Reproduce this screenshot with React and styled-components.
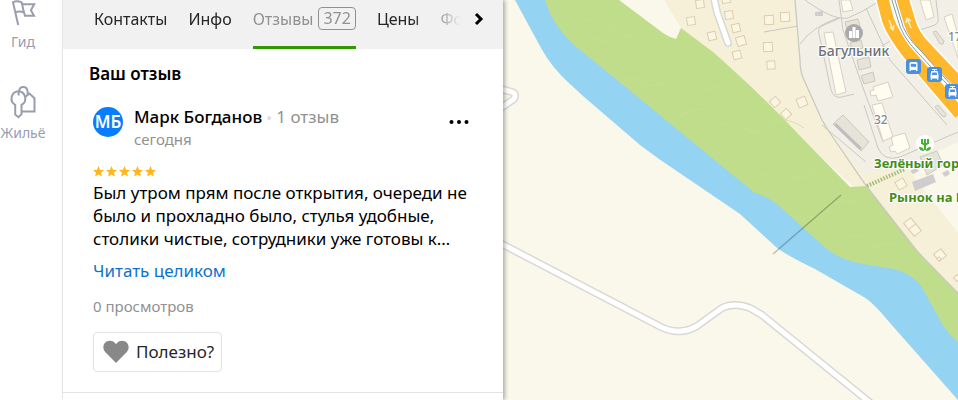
import styled, { createGlobalStyle } from 'styled-components';

const TABS = [
    { title: 'Контакты' },
    { title: 'Инфо' },
    { title: 'Отзывы', count: 372, active: true },
    { title: 'Цены' },
    { title: 'Фото' },
];

// x, y, size, rotation
const HOUSES = [
    [700, 4, 8, -8],
    [691, 21, 8, -8],
    [712, 36, 8, -15],
    [726, -1, 8, -8],
    [729, 15, 8, -8],
    [736, 28, 8, -15],
    [741, 41, 9, -18],
    [737, 55, 8, -15],
    [769, 20, 9, -4],
    [785, 17, 9, -4],
    [768, 47, 9, -4],
    [771, 65, 8, -4],
    [775, 102, 8, -42],
    [786, 114, 8, -42],
    [802, 102, 9, -22],
    [901, 184, 9, -30],
    [910, 224, 9, -38],
    [915, 230, 9, -38],
    [940, 255, 9, -38],
    [939, 259, 3, 45],
    [957, 278, 5, 45],
];

const FlagIcon = () => (
    <svg width="26" height="28" viewBox="0 0 26 28" fill="none" stroke="currentColor" strokeWidth="2" aria-hidden="true">
        <path d="M8.200 25 3 2.200c3-1.600 6-1 8.600.2l1 1.800h11.600l-3.300 6 3.100 5.600H15l-1-3.400c-2.800-1.200-5.800-1.300-8.700-.3M11.800 3l2.200 9.800" />
    </svg>
);

const KeysIcon = () => (
    <svg width="28" height="34" viewBox="0 0 28 34" fill="none" stroke="currentColor" strokeWidth="2" aria-hidden="true">
        <path d="M9 6.200a7.300 7.300 0 0 1 3.500 13.700v9.300l-3 3-3.300-2.600v-9.800A7.300 7.300 0 0 1 9 6.200Z" />
        <path d="M10 6.300C11 .3 18.600.8 18.600 7.300v3.200M9.600 10.600V6.800M16.200 12l4.200-3.500 5.100 4.700v13.300H12.600" />
    </svg>
);

const ChevronIcon = () => (
    <svg width="10" height="14" viewBox="0 0 10 14" fill="none" stroke="#000" strokeWidth="3" aria-hidden="true">
        <path d="m2 2 5 5-5 5" />
    </svg>
);

const StarIcon = () => (
    <svg width="11" height="11" viewBox="0 0 22 22" fill="#ffb81c" aria-hidden="true">
        <path d="m11 0 3.100 7.500 7.900.6-6 5.200 1.900 7.900L11 17l-6.900 4.200L6 13.300 0 8.100l7.900-.6Z" />
    </svg>
);

const HeartIcon = () => (
    <svg width="26" height="24" viewBox="0 0 26 24" fill="#888" aria-hidden="true">
        <path d="M13 23 2.400 12.300C-2 7.200 1.300.8 6.800.8c2.700 0 4.700 1.100 6.200 3.500C14.500 1.900 16.500.800 19.200.800c5.500 0 8.800 6.400 4.400 11.500Z" />
    </svg>
);

const DotsIcon = () => (
    <svg width="20" height="6" viewBox="0 0 20 6" aria-hidden="true">
        <circle cx="2.500" cy="3" r="2" />
        <circle cx="10" cy="3" r="2" />
        <circle cx="17.500" cy="3" r="2" />
    </svg>
);

const Transport = ({ x, y, tram }) => (
    <g transform={`translate(${x} ${y})`}>
        <rect width="15" height="15" rx="3" fill="#4a90e2" />
        {tram ? (
            <>
                <path d="M5 2.500h5M7.500 2.500v2M5 11l-1 2M10 11l1 2" stroke="#fff" />
                <path d="M4.500 4h6l1 4v3.500h-8V8Z" fill="#fff" />
                <path d="M5.300 5.500h4.400l.5 2.500H4.800Z" fill="#4a90e2" />
            </>
        ) : (
            <>
                <path d="M3.500 4.500Q3.500 3 5 3h5q1.500 0 1.500 1.500V12H10v-1H5v1H3.500Z" fill="#fff" />
                <path d="M4.800 4.800h5.400v3H4.800Z" fill="#4a90e2" />
            </>
        )}
    </g>
);

const CityMap = () => (
    <MapSvg viewBox="503 0 455 400" preserveAspectRatio="xMinYMin slice" role="img" aria-label="Карта">
        <rect x="503" width="455" height="400" fill="#faf8ea" />
        <path d="M664 0H797L828 125 868 168 905 165 958 233V294L868 200 681 28Z" fill="#f6f0d9" />
        <path d="M795 0H958V142L905 166 863 173 828 130 800 70Z" fill="#f2f0e6" />
        <path
            d="M515 0 541 48Q552 68 570 84L583 96 640 145 659 159 740 214 776 247Q786 255 815 269L862 296Q872 301 890 323L958 400V320L880 230 700 110 570 0Z"
            fill="#95d3f2"
        />
        <path
            d="M545 0C552 22 562 33 574 45L617 80 740 181 755 193Q768 197 777 204L822 245C848 268 875 263 900 271Q914 276 921 286L940 320Q946 332 958 342V293L945 280 925 260 867 186 850 187 802 138Q765 98 713 52L681 28 676 39Q669 37 663 33L619 0Z"
            fill="#bfdd8a"
        />
        <g fill="none" stroke="#c6e094" opacity=".7">
            <path d="M570 20q18-4 30 6t14-2M590 36q16 10 28 2t20 4M620 83q12-8 24 0t26-6M672 121q16-12 33-12M700 140q12-20 30-15t28 10M700 93q12-8 26-7M745 128q14 8 27-3t32 3M752 180q19-11 38-4t32-14M790 215q25 8 42-8t38 8M835 244q13-12 30-7M865 253q16-14 36-8" />
        </g>

        <g fill="none" strokeLinejoin="round">
            <g stroke="#d8d8d5" strokeWidth="8">
                <path d="M501 89 512 92q5 2 2 7L501 108" />
                <path d="M500 243 661 327Q680 336 697 326L722 308Q734 302 750 308L762 315 873 405" />
                <path d="M714-2 717 12 728 43" strokeLinecap="round" />
            </g>
            <g stroke="#fff" strokeWidth="5">
                <path d="M501 89 512 92q5 2 2 7L501 108" />
                <path d="M500 243 661 327Q680 336 697 326L722 308Q734 302 750 308L762 315 873 405" />
                <path d="M714-2 717 12 728 43" strokeLinecap="round" />
            </g>
        </g>

        {HOUSES.map(([x, y, size, angle]) => (
            <rect
                key={`${x}-${y}`}
                x={x - size / 2}
                y={y - size / 2}
                width={size}
                height={size}
                fill="#fdf5e3"
                stroke="#dccdb0"
                transform={`rotate(${angle} ${x} ${y})`}
            />
        ))}

        <g fill="none" stroke="#c9c9c2">
            <path d="M795 0 800 60Q800 72 804 80L822 120 828 130 867 187 913 247 945 280 958 293" strokeWidth="1.300" />
            <path d="M764 32 798 26M805 0C822 12 836 20 848 18Q863 12 878 2M838 18Q812 27 800 44M839 0 843 30 862 85 883 142M866 8 890 60 925 100 947 125M840 18 824 25Q817 27 819 34L831 90Q834 99 842 97L854 94M920 30 932 26Q940 24 938 17L936 0M882 46 893 39M864 105 878 148Q884 162 900 157L958 132M822 125 866 162" />
        </g>
        <path d="M773 254 841 195" stroke="#000" strokeOpacity=".25" strokeWidth="1.300" />
        <path d="M867 186 905 169" stroke="#a5bd79" strokeWidth="4" strokeDasharray="1.500 1.500" />

        <g fill="#e6e3d8" stroke="#cdc8bd">
            <path d="M845 22 858 19 861 30 848 33ZM850 43 861 40 863 48 852 51ZM857 60 869 57 871 67 859 70ZM861 76 873 72 875 81 864 84ZM920 157 937 151 943 165 927 175ZM933 32 936 31 944 41 943 44 940 44ZM935 107 938 105 946 114 945 117 942 116Z" />
            <path d="M843 115 869 142 861 151 833 124Z" />
        </g>
        <path d="M835 124 861 149" stroke="#bfbdc1" strokeWidth="3" />
        <path d="M815 12 823 11v5h-8ZM912 182 933 174 936 182 915 191ZM910 171 916 168 919 171 913 174ZM942 173 948 170 950 174 945 177Z" fill="#cfcdce" />
        <g fill="#fffdf0" stroke="#d7d1c3">
            <path d="M824 33 833 32 846 92 836 95ZM841 0H850L853 10 843 12ZM873 87 888 82 893 97 878 101 876 95 871 96 870 91 874 90ZM872 105 882 103 893 137 883 141ZM891 137 905 133 910 148 897 154 895 151 891 152 889 147 893 145ZM920 0H930L934 17 926 20ZM944 17 952 14 958 35V58Z" />
        </g>

        <g fill="none" strokeLinejoin="round">
            <path d="M882-3 888 20Q893 34 908 53L960 114M902-3 910 23Q914 36 925 47L960 84" stroke="#fff" strokeWidth="15" />
            <path d="M882-3 888 20Q893 34 908 53L960 114M902-3 910 23Q914 36 925 47L960 84" stroke="#ffb72b" strokeWidth="12" />
            <path d="M892-3 899 20Q902 35 919 53L960 98" stroke="#fff" strokeWidth="5" />
            <path d="M891-3 898 20Q901 35 918 53L960 98M894-3 901 20Q904 35 921 51L960 95" stroke="#879b9d" />
            <path d="m889 20 4 10m-3-3 3 3 1-5M911 28l-4-10m-1 5 1-5 4 3" stroke="#fff0bd" strokeWidth="1.500" />
        </g>
        <Transport x={906} y={59} />
        <Transport x={927} y={67} tram />
        <Transport x={945} y={84} tram />

        <circle cx="854" cy="33" r="9" fill="#aaa9ac" />
        <path d="M849 38v-7h3v7Zm3.500 0V27h3v11Zm3.500 0v-8h3v8Z" fill="#fff" />
        <circle cx="925" cy="144" r="9" fill="#fff" />
        <path d="M921 139h2v5h-2Zm3 0h2v5h-2Zm3 0h2v5h-2ZM921 143h8l-2 2h-4ZM924 144h2v6h-2ZM919 147q5 0 5 4-5 0-5-4Zm12 0q-5 0-5 4 5 0 5-4Z" fill="#43b32a" />

        <MapLabel x="818" y="56" $size={14} $color="#6e7076">Багульник</MapLabel>
        <MapLabel x="874" y="124" $size={12} $color="#88888a">32</MapLabel>
        <MapLabel x="948" y="41" $size={12} $color="#88888a">17</MapLabel>
        <MapLabel x="874" y="168" $size={13} $color="#468d16" $bold>Зелёный город</MapLabel>
        <MapLabel x="889" y="202" $size={13} $color="#468d16" $bold>Рынок на Ким</MapLabel>
    </MapSvg>
);

const Sidebar = () => (
    <SidebarStyled>
        <SidebarLink href="#guide">
            <FlagIcon />
            Гид
        </SidebarLink>
        <SidebarLink href="#housing">
            <KeysIcon />
            Жильё
        </SidebarLink>
    </SidebarStyled>
);

const Tabs = () => (
    <TabsBar>
        <TabList>
            {TABS.map(({ title, count, active }) => (
                <Tab key={title} href="#reviews" $active={active}>
                    {title}
                    {count && <Count>{count}</Count>}
                </Tab>
            ))}
        </TabList>
        <NextButton aria-label="Далее">
            <ChevronIcon />
        </NextButton>
    </TabsBar>
);

const Review = () => (
    <ReviewStyled>
        <Author>
            <Avatar>МБ</Avatar>
            <AuthorInfo>
                <AuthorName>
                    Марк Богданов <Dot>•</Dot> <Muted>1 отзыв</Muted>
                </AuthorName>
                <DateText>сегодня</DateText>
            </AuthorInfo>
            <MenuButton aria-label="Меню">
                <DotsIcon />
            </MenuButton>
        </Author>
        <Stars>
            {[1, 2, 3, 4, 5].map((star) => (
                <StarIcon key={star} />
            ))}
        </Stars>
        <ReviewText>
            Был утром прям после открытия, очереди не было и прохладно было, стулья удобные, столики чистые, сотрудники уже
            готовы к…
        </ReviewText>
        <ReadMore href="#review">Читать целиком</ReadMore>
        <Views>0 просмотров</Views>
        <UsefulButton>
            <HeartIcon />
            Полезно?
        </UsefulButton>
    </ReviewStyled>
);

const App = () => (
    <>
        <GlobalStyle />
        <Layout>
            <Sidebar />
            <Panel>
                <Tabs />
                <Title>Ваш отзыв</Title>
                <Review />
            </Panel>
            <MapArea>
                <CityMap />
            </MapArea>
        </Layout>
    </>
);

const GlobalStyle = createGlobalStyle`
    * {
        box-sizing: border-box;
    }

    body {
        margin: 0;
        font: 17px/22px 'Noto Sans', sans-serif;
        color: #000;
        background-color: #fff;
    }

    button {
        font: inherit;
        color: inherit;
        background: none;
        border: 0;
        padding: 0;
        cursor: pointer;
    }

    a {
        text-decoration: none;
    }

    svg {
        display: block;
        flex: none;
    }
`;
const Layout = styled.div`
    display: grid;
    grid-template-columns: 63px minmax(0, 440px) minmax(0, 1fr);
    height: 100vh;
    overflow: hidden;
`;
const SidebarStyled = styled.nav`
    display: flex;
    flex-direction: column;
    gap: 33px;
    padding-right: 16px;
    border-right: 1px solid #eee;
`;
const SidebarLink = styled.a`
    display: flex;
    flex-direction: column;
    align-items: center;
    gap: 4px;
    font-size: 14px;
    line-height: 20px;
    color: #9a9db0;
`;
const Panel = styled.main`
    z-index: 1;
    background-color: #fff;
    box-shadow: 2px 0 4px rgba(0, 0, 0, 0.3);
`;
const TabsBar = styled.div`
    display: flex;
    height: 49px;
    padding-left: 31px;
    background-color: #f1f1f1;
`;
const TabList = styled.nav`
    display: flex;
    flex: 1;
    gap: 21px;
    min-width: 0;
    overflow: hidden;
    mask-image: linear-gradient(to right, #000 calc(100% - 50px), transparent);
`;
const Tab = styled.a`
    display: flex;
    gap: 5px;
    align-items: center;
    height: 100%;
    padding-bottom: 12px;
    font-size: 16px;
    color: ${({ $active }) => ($active ? '#919191' : '#262626')};
    box-shadow: ${({ $active }) => ($active ? 'inset 0 -3px #2e9a00' : 'none')};
`;
const Count = styled.span`
    padding: 0 4px;
    line-height: 21px;
    border: 1px solid #919191;
    border-radius: 4px;
`;
const NextButton = styled.button`
    display: flex;
    align-items: center;
    width: 42px;
    height: 38px;
    padding-left: 13px;
`;
const Title = styled.h2`
    margin: 14px 26px 21px;
    font-size: 17px;
    font-weight: 600;
    line-height: 22px;
`;
const ReviewStyled = styled.article`
    display: flex;
    flex-direction: column;
    align-items: flex-start;
    padding: 0 34px 20px 30px;
    border-bottom: 1px solid #e2e2e2;
`;
const Author = styled.header`
    display: flex;
    gap: 11px;
    width: 100%;
`;
const Avatar = styled.span`
    display: grid;
    place-items: center;
    width: 30px;
    height: 30px;
    margin-top: 1px;
    border-radius: 50%;
    background-color: #077dff;
    color: #fff;
    font-size: 17px;
    font-weight: 600;
`;
const AuthorInfo = styled.div`
    flex: 1;
`;
const AuthorName = styled.div`
    font-weight: 500;
`;
const Dot = styled.span`
    font-size: 14px;
    color: #ddd;
`;
const Muted = styled.span`
    font-weight: 400;
    color: #919191;
`;
const DateText = styled.div`
    font-size: 15px;
    line-height: 20px;
    color: #919191;
`;
const MenuButton = styled.button`
    height: 32px;
`;
const Stars = styled.div`
    display: flex;
    gap: 2px;
    margin: 17px 0 4px;
`;
const ReviewText = styled.p`
    margin: 0;
    line-height: 23px;
`;
const ReadMore = styled.a`
    margin-top: 10px;
    color: #0e72cb;
`;
const Views = styled.div`
    margin-top: 13px;
    font-size: 15px;
    color: #919191;
`;
const UsefulButton = styled.button`
    display: flex;
    align-items: center;
    gap: 7px;
    height: 40px;
    margin-top: 15px;
    padding: 0 7px 0 9px;
    border: 1px solid #e2e2e2;
    border-radius: 4px;
    color: #262626;
`;
const MapArea = styled.section`
    min-width: 0;
    background-color: #faf8ea;
`;
const MapSvg = styled.svg`
    width: 100%;
    height: 100%;
`;
const MapLabel = styled.text`
    font-size: ${({ $size }) => $size}px;
    font-weight: ${({ $bold }) => ($bold ? 700 : 500)};
    fill: ${({ $color }) => $color};
    stroke: #fff;
    stroke-width: 2px;
    paint-order: stroke;
`;

export default App;
